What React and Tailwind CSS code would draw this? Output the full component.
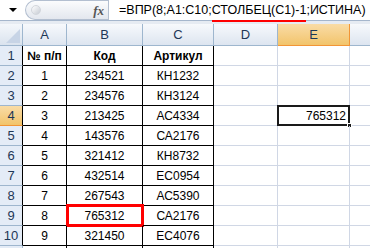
import React from 'react';

const cols = [
  { key: 'A', w: 44 },
  { key: 'B', w: 76 },
  { key: 'C', w: 71 },
  { key: 'D', w: 64 },
  { key: 'E', w: 72 },
  { key: 'F', w: 43 },
];

const data = [
  ['№ п/п', 'Код', 'Артикул'],
  ['1', '234521', 'КН1232'],
  ['2', '234576', 'КН3124'],
  ['3', '213425', 'АС4334'],
  ['4', '143576', 'СА2176'],
  ['5', '321412', 'КН8732'],
  ['6', '432514', 'ЕС0954'],
  ['7', '267543', 'АС5390'],
  ['8', '765312', 'СА2176'],
  ['9', '321450', 'ЕС4076'],
];

function ColHeader({ label, active }) {
  return (
    <div
      className={
        'h-[22px] flex items-center justify-center text-[13px] border-r border-b ' +
        (active
          ? 'bg-gradient-to-b from-[#f9dca6] to-[#f2c46a] border-[#f29536] text-[#1e3756]'
          : 'bg-gradient-to-b from-[#f7f9fc] to-[#dde5f0] border-[#9eb6ce] text-[#1e3756]')
      }
    >
      {label}
    </div>
  );
}

export default function App() {
  return (
    <div className="w-[370px] h-[248px] overflow-hidden bg-white font-['Liberation_Sans',sans-serif] relative">
      {/* formula bar */}
      <div className="h-[21px] flex bg-white border-b border-[#a5b6cc]">
        <div className="w-[25px] flex items-center justify-center">
          <div className="w-0 h-0 border-l-[4px] border-r-[4px] border-t-[4px] border-l-transparent border-r-transparent border-t-black" />
        </div>
        <div className="w-[83px] h-[20px] rounded-l-full border border-r-0 border-[#b3bfd0] bg-gradient-to-b from-[#fbfcfd] to-[#e3e7ee] flex items-center">
          <div className="ml-[5px] w-[10px] h-[10px] rounded-full bg-gradient-to-br from-[#ffffff] to-[#c7ccd4] border border-[#d2d6dc]" />
          <span className="ml-auto mr-[4px] font-['Liberation_Serif',serif] italic font-bold text-[13px] text-[#555] leading-none">
            fx
          </span>
        </div>
        <div className="w-px bg-[#b3bfd0]" />
        <div className="relative flex items-center pl-[10px] text-[12.5px] text-black whitespace-nowrap">
          <span>=ВПР(8;A1:C10;</span>
          <span className="relative">
            СТОЛБЕЦ(C1)-1
            <span className="absolute left-0 right-0 top-[19px] h-[2px] bg-[#ff0000]" />
          </span>
          <span>;ИСТИНА)</span>
        </div>
      </div>
      <div className="h-[3px] bg-[#e6ebf2]" />

      {/* grid */}
      <div className="grid grid-cols-[23px_44px_76px_71px_64px_72px_43px] text-[12px] text-black">
        <div className="h-[22px] bg-gradient-to-b from-[#f4f7fb] to-[#dae3ee] border-r border-b border-[#9eb6ce] relative">
          <svg className="absolute right-[2px] bottom-[2px]" width="14" height="14" viewBox="0 0 14 14">
            <polygon points="14,0 14,14 0,14" fill="#c7d4e6" />
          </svg>
        </div>
        {cols.map((c) => (
          <ColHeader key={c.key} label={c.key === 'F' ? '' : c.key} active={c.key === 'E'} />
        ))}

        {data.map((row, i) => {
          const rowNum = i + 1;
          const activeRow = rowNum === 4;
          return (
            <React.Fragment key={rowNum}>
              <div
                className={
                  'h-[20px] flex items-center justify-center text-[13px] border-b ' +
                  (activeRow
                    ? 'bg-gradient-to-b from-[#f9dca6] to-[#f2c46a] border-[#f29536] text-[#1e3756]'
                    : 'bg-[#e4ecf7] border-[#9eb6ce] text-[#1e3756]') +
                  ' border-r border-r-black'
                }
              >
                {rowNum}
              </div>
              {row.map((v, j) => (
                <div
                  key={j}
                  className={
                    'h-[20px] flex items-center justify-center border-r border-b border-black relative ' +
                    (rowNum === 1 ? 'font-bold text-[12px]' : 'text-[12px]')
                  }
                >
                  {v}
                  {rowNum === 9 && j === 1 && (
                    <div className="absolute -left-[1px] -top-[2px] w-[78px] h-[23px] border-[3px] border-[#ff0000]" />
                  )}
                </div>
              ))}
              <div className="h-[20px] border-r border-b border-[#d0d7e5]" />
              <div className="h-[20px] border-r border-b border-[#d0d7e5] relative flex items-center justify-end pr-[3px]">
                {activeRow && (
                  <>
                    <span>765312</span>
                    <div className="absolute -left-[1px] -top-[1px] w-[73px] h-[21px] border-[2px] border-[#1a1a1a]" />
                    <div className="absolute -right-[3px] -bottom-[3px] w-[5px] h-[5px] bg-[#1a1a1a] border border-white" />
                  </>
                )}
              </div>
              <div className="h-[20px] border-r border-b border-[#d0d7e5]" />
            </React.Fragment>
          );
        })}

        <div className="h-[20px] bg-[#e4ecf7] border-r border-[#9eb6ce]" />
        <div className="h-[20px] border-r border-black" />
        <div className="h-[20px] border-r border-black" />
        <div className="h-[20px] border-r border-black" />
        <div className="h-[20px] border-r border-[#d0d7e5]" />
        <div className="h-[20px] border-r border-[#d0d7e5]" />
        <div className="h-[20px] border-r border-[#d0d7e5]" />
      </div>
    </div>
  );
}
